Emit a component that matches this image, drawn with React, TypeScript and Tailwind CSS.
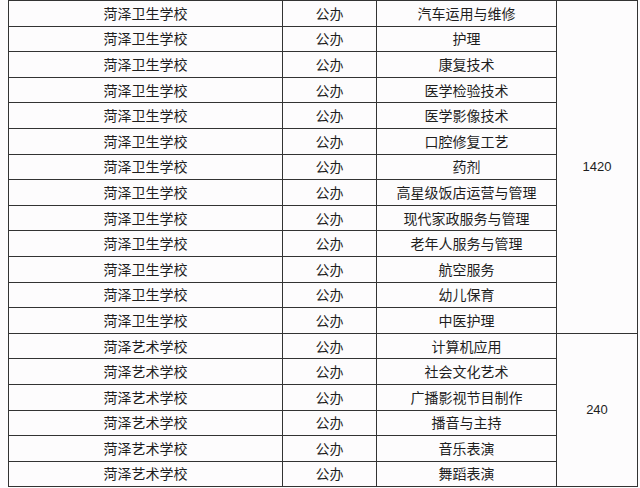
const rows: [string, string][] = [
  ["菏泽卫生学校", "汽车运用与维修"],
  ["菏泽卫生学校", "护理"],
  ["菏泽卫生学校", "康复技术"],
  ["菏泽卫生学校", "医学检验技术"],
  ["菏泽卫生学校", "医学影像技术"],
  ["菏泽卫生学校", "口腔修复工艺"],
  ["菏泽卫生学校", "药剂"],
  ["菏泽卫生学校", "高星级饭店运营与管理"],
  ["菏泽卫生学校", "现代家政服务与管理"],
  ["菏泽卫生学校", "老年人服务与管理"],
  ["菏泽卫生学校", "航空服务"],
  ["菏泽卫生学校", "幼儿保育"],
  ["菏泽卫生学校", "中医护理"],
  ["菏泽艺术学校", "计算机应用"],
  ["菏泽艺术学校", "社会文化艺术"],
  ["菏泽艺术学校", "广播影视节目制作"],
  ["菏泽艺术学校", "播音与主持"],
  ["菏泽艺术学校", "音乐表演"],
  ["菏泽艺术学校", "舞蹈表演"],
]

const cell = "flex items-center justify-center border-r border-b border-[#333]"

export default function App() {
  return (
    <div className="h-[488px] w-[640px] overflow-hidden bg-[#fdfcfd] pl-[8px] font-['Noto_Sans_CJK_SC',sans-serif] text-[14px] text-[#1e1e1e]">
      <div className="grid w-[630px] grid-cols-[274px_94px_180px_81px] grid-rows-[repeat(19,25.6px)] border-t border-l border-[#333]">
        <div className={`${cell} col-start-4 row-start-1 row-span-13 font-['Liberation_Sans',sans-serif] text-[13px]`}>1420</div>
        <div className={`${cell} col-start-4 row-start-14 row-span-6 font-['Liberation_Sans',sans-serif] text-[13px]`}>240</div>
        {rows.map(([school, major], i) => (
          <div key={i} className="contents">
            <div className={`${cell} col-start-1`}>{school}</div>
            <div className={`${cell} col-start-2`}>公办</div>
            <div className={`${cell} col-start-3`}>{major}</div>
          </div>
        ))}
      </div>
    </div>
  )
}
